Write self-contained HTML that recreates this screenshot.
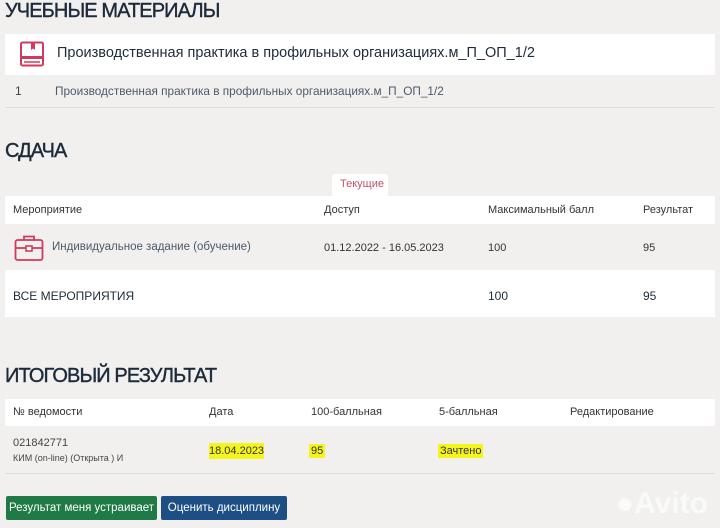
<!DOCTYPE html>
<html><head><meta charset="utf-8"><style>
body{margin:0;width:720px;height:528px;background:#f1f0ee;font-family:"Liberation Sans","DejaVu Sans",sans-serif;color:#2b3440;position:relative;overflow:hidden}
.a{position:absolute;white-space:nowrap}
h2{position:absolute;margin:0;font-weight:normal;font-size:20px;color:#1d2b3b;letter-spacing:-0.9px;-webkit-text-stroke:0.4px #1d2b3b}
.w{position:absolute;background:#fff}
.s{font-size:11px;color:#333}
.hl{background:#f5f51e}
.btn{position:absolute;color:#fff;font-size:11.5px;text-align:center;line-height:24px;border-radius:2px}
</style></head><body>
<h2 style="left:5px;top:0px">УЧЕБНЫЕ МАТЕРИАЛЫ</h2>
<div class="w" style="left:5px;top:34px;width:710px;height:41px"></div>
<svg class="a" style="left:19px;top:41px" width="27" height="27" viewBox="0 0 27 27"><rect x="2" y="1.5" width="22" height="23" rx="1.5" fill="none" stroke="#d23a5c" stroke-width="2"/><rect x="2" y="15" width="22" height="3" fill="#d23a5c"/><line x1="5" y1="21" x2="21" y2="21" stroke="#d23a5c" stroke-width="1.5"/><path d="M12 2v7l2-1.5 2 1.5V2z" fill="#d23a5c"/></svg>
<div class="a" style="left:57px;top:45px;font-size:14.5px;color:#1d2b3b">Производственная практика в профильных организациях.м_П_ОП_1/2</div>
<div class="a" style="left:15px;top:84px;font-size:12px;color:#444">1</div>
<div class="a" style="left:55px;top:84px;font-size:11.8px;color:#4a5a6a">Производственная практика в профильных организациях.м_П_ОП_1/2</div>
<div class="a" style="left:5px;top:107px;width:710px;height:1px;background:#ddd"></div>

<h2 style="left:5px;top:140px">СДАЧА</h2>
<div class="w" style="left:332px;top:174px;width:56px;height:22px;border-radius:3px 3px 0 0"></div>
<div class="a" style="left:340px;top:178px;font-size:11px;color:#c0506a">Текущие</div>
<div class="w" style="left:5px;top:196px;width:710px;height:28px"></div>
<div class="a s" style="left:13px;top:204px">Мероприятие</div>
<div class="a s" style="left:324px;top:204px">Доступ</div>
<div class="a s" style="left:488px;top:204px">Максимальный балл</div>
<div class="a s" style="left:643px;top:204px">Результат</div>
<svg class="a" style="left:14px;top:234px" width="30" height="28" viewBox="0 0 30 28"><path d="M10 6V2.5h10V6" fill="none" stroke="#d23a5c" stroke-width="1.8"/><rect x="1.5" y="6" width="27" height="20" rx="2" fill="none" stroke="#d23a5c" stroke-width="1.8"/><path d="M1.5 14H28.5" stroke="#d23a5c" stroke-width="1.8"/><rect x="12" y="12" width="6" height="5" fill="#fff" stroke="#d23a5c" stroke-width="1.6"/></svg>
<div class="a" style="left:52px;top:241px;font-size:11.5px;color:#4a5a6a">Индивидуальное задание (обучение)</div>
<div class="a s" style="left:324px;top:242px">01.12.2022 - 16.05.2023</div>
<div class="a s" style="left:488px;top:242px">100</div>
<div class="a s" style="left:643px;top:242px">95</div>
<div class="w" style="left:5px;top:270px;width:710px;height:47px"></div>
<div class="a" style="left:13px;top:289px;font-size:12px;color:#1d2b3b">ВСЕ МЕРОПРИЯТИЯ</div>
<div class="a" style="left:488px;top:289px;font-size:12px;color:#1d2b3b">100</div>
<div class="a" style="left:643px;top:289px;font-size:12px;color:#1d2b3b">95</div>

<h2 style="left:5px;top:365px">ИТОГОВЫЙ РЕЗУЛЬТАТ</h2>
<div class="w" style="left:5px;top:399px;width:710px;height:27px"></div>
<div class="a s" style="left:13px;top:406px">№ ведомости</div>
<div class="a s" style="left:209px;top:406px">Дата</div>
<div class="a s" style="left:311px;top:406px">100-балльная</div>
<div class="a s" style="left:439px;top:406px">5-балльная</div>
<div class="a s" style="left:570px;top:406px">Редактирование</div>
<div class="a" style="left:13px;top:437px;font-size:11px;color:#444">021842771</div>
<div class="a" style="left:13px;top:453px;font-size:9px;color:#444">КИМ (on-line) (Открыта ) И</div>
<div class="a s hl" style="left:209px;top:443px;padding:2px 0">18.04.2023</div>
<div class="a s hl" style="left:309px;top:444px;padding:1px 2px">95</div>
<div class="a s hl" style="left:438px;top:444px;padding:1px 2px">Зачтено</div>
<div class="a" style="left:5px;top:473px;width:710px;height:1px;background:#ddd"></div>
<div class="btn" style="left:6px;top:496px;width:151px;background:#1f7a45">Результат меня устраивает</div>
<div class="btn" style="left:161px;top:496px;width:126px;background:#1d4f85">Оценить дисциплину</div>
<div class="a" style="left:616px;top:487px;font-size:30px;font-weight:bold;color:#fff;opacity:.7">●Avito</div>
</body></html>
